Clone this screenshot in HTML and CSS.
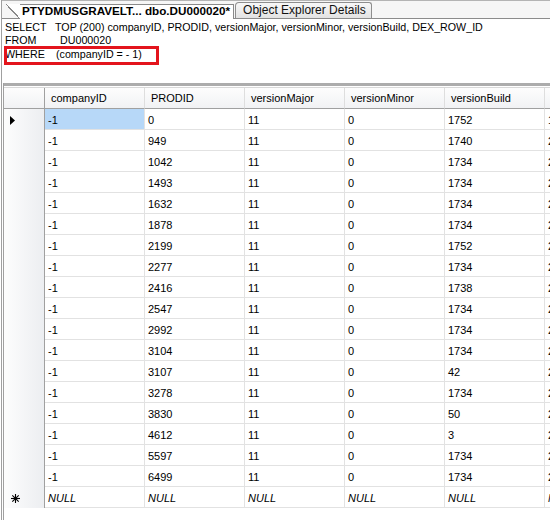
FILE: index.html
```html
<!DOCTYPE html>
<html>
<head>
<meta charset="utf-8">
<link rel="stylesheet" href="styles.css">
</head>
<body>
<div class="window">
  <div class="tabstrip">
    <div class="tab tab-active">PTYDMUSGRAVELT... dbo.DU000020*</div>
    <div class="tab tab-inactive">Object Explorer Details</div>
  </div>
  <div class="sql">
    <div class="sql-line"><span class="kw kw-select">SELECT</span><span>TOP (200) companyID, PRODID, versionMajor, versionMinor, versionBuild, DEX_ROW_ID</span></div>
    <div class="sql-line"><span class="kw kw-from">FROM</span><span>DU000020</span></div>
    <div class="sql-line"><span class="kw kw-where">WHERE</span><span>(companyID = - 1)</span></div>
    <div class="highlight"></div>
  </div>
  <div class="results">
    <div class="splitter"></div>
    <div class="grid">
      <div class="row head">
        <div class="cell rh"></div>
        <div class="cell">companyID</div>
        <div class="cell">PRODID</div>
        <div class="cell">versionMajor</div>
        <div class="cell">versionMinor</div>
        <div class="cell">versionBuild</div>
        <div class="cell">DEX_ROW_ID</div>
      </div>
      <div class="row">
        <div class="cell rh"><svg class="pointer" width="5" height="9" viewBox="0 0 5 9"><polygon points="0,0 5,4.5 0,9" fill="#000"/></svg></div>
        <div class="cell selected">-1</div><div class="cell">0</div><div class="cell">11</div><div class="cell">0</div><div class="cell">1752</div><div class="cell">1</div>
      </div>
      <div class="row"><div class="cell rh"></div><div class="cell">-1</div><div class="cell">949</div><div class="cell">11</div><div class="cell">0</div><div class="cell">1740</div><div class="cell">2</div></div>
      <div class="row"><div class="cell rh"></div><div class="cell">-1</div><div class="cell">1042</div><div class="cell">11</div><div class="cell">0</div><div class="cell">1734</div><div class="cell">2</div></div>
      <div class="row"><div class="cell rh"></div><div class="cell">-1</div><div class="cell">1493</div><div class="cell">11</div><div class="cell">0</div><div class="cell">1734</div><div class="cell">2</div></div>
      <div class="row"><div class="cell rh"></div><div class="cell">-1</div><div class="cell">1632</div><div class="cell">11</div><div class="cell">0</div><div class="cell">1734</div><div class="cell">2</div></div>
      <div class="row"><div class="cell rh"></div><div class="cell">-1</div><div class="cell">1878</div><div class="cell">11</div><div class="cell">0</div><div class="cell">1734</div><div class="cell">2</div></div>
      <div class="row"><div class="cell rh"></div><div class="cell">-1</div><div class="cell">2199</div><div class="cell">11</div><div class="cell">0</div><div class="cell">1752</div><div class="cell">2</div></div>
      <div class="row"><div class="cell rh"></div><div class="cell">-1</div><div class="cell">2277</div><div class="cell">11</div><div class="cell">0</div><div class="cell">1734</div><div class="cell">2</div></div>
      <div class="row"><div class="cell rh"></div><div class="cell">-1</div><div class="cell">2416</div><div class="cell">11</div><div class="cell">0</div><div class="cell">1738</div><div class="cell">2</div></div>
      <div class="row"><div class="cell rh"></div><div class="cell">-1</div><div class="cell">2547</div><div class="cell">11</div><div class="cell">0</div><div class="cell">1734</div><div class="cell">2</div></div>
      <div class="row"><div class="cell rh"></div><div class="cell">-1</div><div class="cell">2992</div><div class="cell">11</div><div class="cell">0</div><div class="cell">1734</div><div class="cell">2</div></div>
      <div class="row"><div class="cell rh"></div><div class="cell">-1</div><div class="cell">3104</div><div class="cell">11</div><div class="cell">0</div><div class="cell">1734</div><div class="cell">2</div></div>
      <div class="row"><div class="cell rh"></div><div class="cell">-1</div><div class="cell">3107</div><div class="cell">11</div><div class="cell">0</div><div class="cell">42</div><div class="cell">2</div></div>
      <div class="row"><div class="cell rh"></div><div class="cell">-1</div><div class="cell">3278</div><div class="cell">11</div><div class="cell">0</div><div class="cell">1734</div><div class="cell">2</div></div>
      <div class="row"><div class="cell rh"></div><div class="cell">-1</div><div class="cell">3830</div><div class="cell">11</div><div class="cell">0</div><div class="cell">50</div><div class="cell">2</div></div>
      <div class="row"><div class="cell rh"></div><div class="cell">-1</div><div class="cell">4612</div><div class="cell">11</div><div class="cell">0</div><div class="cell">3</div><div class="cell">2</div></div>
      <div class="row"><div class="cell rh"></div><div class="cell">-1</div><div class="cell">5597</div><div class="cell">11</div><div class="cell">0</div><div class="cell">1734</div><div class="cell">2</div></div>
      <div class="row"><div class="cell rh"></div><div class="cell">-1</div><div class="cell">6499</div><div class="cell">11</div><div class="cell">0</div><div class="cell">1734</div><div class="cell">2</div></div>
      <div class="row newrow">
        <div class="cell rh"><svg class="star" width="9" height="9" viewBox="0 0 9 9"><g stroke="#000" stroke-width="1.1"><line x1="4.5" y1="0" x2="4.5" y2="9"/><line x1="0" y1="4.5" x2="9" y2="4.5"/><line x1="1.3" y1="1.3" x2="7.7" y2="7.7"/><line x1="7.7" y1="1.3" x2="1.3" y2="7.7"/></g></svg></div>
        <div class="cell null">NULL</div><div class="cell null">NULL</div><div class="cell null">NULL</div><div class="cell null">NULL</div><div class="cell null">NULL</div><div class="cell null">NULL</div>
      </div>
    </div>
  </div>
</div>
</body>
</html>
```

FILE: styles.css
```css
* { box-sizing: border-box; }
html, body { margin: 0; padding: 0; }
body {
  width: 550px;
  height: 520px;
  overflow: hidden;
  background: #fff;
  font-family: "Liberation Sans", Arial, sans-serif;
  font-size: 11px;
  color: #000;
}
.window {
  height: 520px;
  margin-left: 1px;
  border-left: 1px solid #a0a0a0;
  display: flex;
  flex-direction: column;
}
.tabstrip {
  height: 19px;
  flex: none;
  border-top: 1px solid #b4b4b4;
  border-bottom: 1px solid #8c8c8c;
  background: #f6f6f6;
  display: flex;
  align-items: flex-end;
  padding-left: 4px;
}
.tab { white-space: nowrap; }
.tab-active {
  height: 15px;
  margin-bottom: -1px;
  padding: 0 3px 0 16px;
  font-weight: bold;
  font-size: 11.7px;
  line-height: 14px;
  border-right: 1px solid #8a8a8a;
  background:
    linear-gradient(#8a8a8a, #8a8a8a) 14px 0 / 100% 1px no-repeat,
    linear-gradient(to top right, transparent calc(50% - 0.6px), #8a8a8a calc(50% - 0.6px), #8a8a8a calc(50% + 0.6px), #fff calc(50% + 0.6px)) 0 0 / 14px 100% no-repeat,
    linear-gradient(#fff, #fff) 14px 0 / 100% 100% no-repeat;
}
.tab-inactive {
  height: 16px;
  margin-left: 1px;
  padding: 0 5px 0 7px;
  font-size: 12px;
  line-height: 15px;
  color: #111;
  border: 1px solid #8e8e8e;
  border-bottom: none;
  border-radius: 4px 3px 0 0;
  background: linear-gradient(#f8f8f8, #e2e2e2);
}
.sql {
  position: relative;
  flex: none;
  height: 64px;
  padding: 2px 0 0 3px;
  font-size: 10.7px;
  line-height: 13.3px;
  white-space: nowrap;
}
.sql-line { display: flex; }
.kw { display: inline-block; }
.kw-select { width: 50px; }
.kw-from { width: 55px; }
.kw-where { width: 51px; }
.highlight {
  position: absolute;
  left: 2px;
  top: 27px;
  width: 155px;
  height: 19px;
  border: 3px solid #e3141c;
}
.results {
  flex: 1;
  margin-left: 1px;
  border-left: 1px solid #a0a0a0;
  overflow: hidden;
}
.splitter {
  height: 5px;
  border-top: 3px solid #acacac;
  border-bottom: 1px solid #d8d8d8;
}
.grid { overflow: hidden; }
.row {
  display: grid;
  grid-template-columns: 41px repeat(6, 100px);
  height: 21px;
}
.cell {
  border-right: 1px solid #e2e2e2;
  border-bottom: 1px solid #e2e2e2;
  padding: 2px 0 0 3px;
  line-height: 18px;
  white-space: nowrap;
  overflow: hidden;
}
.cell.rh {
  border-right: 1px solid #a0a0a0;
  border-bottom: none;
  background: linear-gradient(to right, #fdfdfd, #eceef1);
  display: flex;
  align-items: center;
  padding: 2px 0 0 6px;
}
.head .cell {
  background: linear-gradient(#fdfdfd, #f1f2f4);
  border-bottom: 1px solid #a0a0a0;
  border-right-color: #dedede;
  padding: 0 0 0 6px;
  line-height: 20px;
}
.head .cell.rh { border-right-color: #a0a0a0; }
.newrow .cell.rh { padding-left: 7px; }
.selected { background: #b7d8f8; }
.null { font-style: italic; }
.pointer, .star { display: block; }
```
